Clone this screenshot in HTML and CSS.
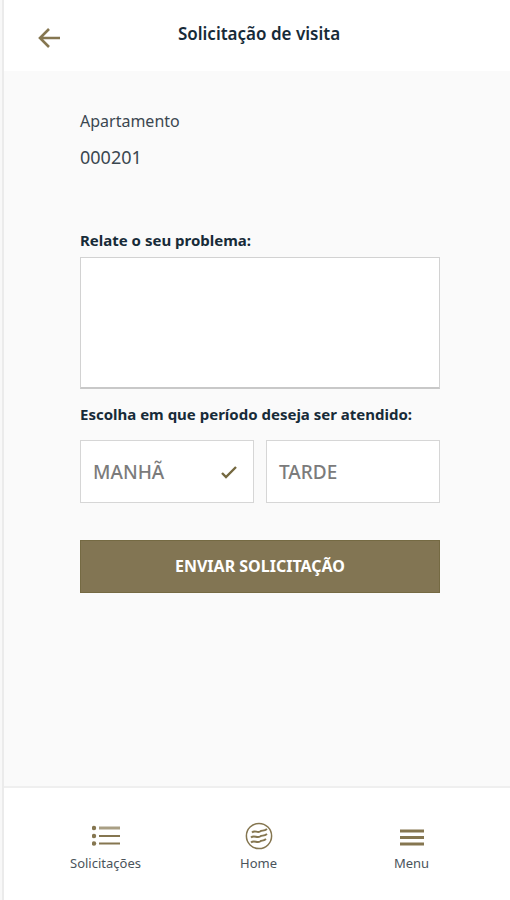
FILE: index.html
```
<!DOCTYPE html>
<html lang="pt-BR">
<head>
  <meta charset="UTF-8" />
  <meta name="viewport" content="width=device-width, initial-scale=1.0"/>
  <title>Solicitação de visita</title>
  <link rel="stylesheet" href="styles.css">
</head>
<body>

  <header class="header">
    <a class="back-btn" href="#" aria-label="Voltar">
      <svg width="22" height="22" viewBox="0 0 22 22" fill="none" stroke="currentColor" stroke-width="2.6">
        <path d="M22 11H2M11 2L2 11L11 20"/>
      </svg>
    </a>
    <h1>Solicitação de visita</h1>
  </header>

  <main class="main">
    <dl class="unit">
      <dt>Apartamento</dt>
      <dd>000201</dd>
    </dl>

    <form class="visit-form">
      <label class="field-title" for="problem">Relate o seu problema:</label>
      <textarea id="problem" name="problem"></textarea>

      <fieldset class="period">
        <legend class="field-title">Escolha em que período deseja ser atendido:</legend>
        <div class="period-options">
          <label class="option">
            <input type="radio" name="period" value="manha" checked />
            <span>MANHÃ</span>
            <svg class="check" width="16" height="14" viewBox="0 0 16 14" fill="none" stroke="currentColor" stroke-width="2.4">
              <path d="M1 8L5 12L15 2"/>
            </svg>
          </label>
          <label class="option">
            <input type="radio" name="period" value="tarde" />
            <span>TARDE</span>
            <svg class="check" width="16" height="14" viewBox="0 0 16 14" fill="none" stroke="currentColor" stroke-width="2.4">
              <path d="M1 8L5 12L15 2"/>
            </svg>
          </label>
        </div>
      </fieldset>

      <button class="submit-btn" type="submit">ENVIAR SOLICITAÇÃO</button>
    </form>
  </main>

  <nav class="bottom-nav">
    <a href="#">
      <svg width="28" height="28" viewBox="0 0 28 28" fill="none" stroke="currentColor">
        <path d="M7 6H28" stroke-width="3" opacity="0.7"/>
        <path d="M7 14H28M7 21.5H28" stroke-width="2.2"/>
        <g fill="currentColor" stroke="none">
          <circle cx="2" cy="6" r="2.2"/>
          <circle cx="2" cy="14" r="2.2"/>
          <circle cx="2" cy="21.5" r="2.2"/>
        </g>
      </svg>
      <span>Solicitações</span>
    </a>
    <a href="#">
      <svg width="28" height="28" viewBox="0 0 28 28" fill="none" stroke="currentColor">
        <circle cx="14" cy="14" r="12.6" stroke-width="1.5"/>
        <path d="M7 10.5C10 7.5 12 11.5 15 9.5C17 8 19 9.5 22 7M6 15.5C9 12.5 12 16.5 15 14.5C17 13 19 14.5 22 12M6 20.5C9 17.5 12 21.5 15 19.5C17 18 18 19.5 21 17" stroke-width="1.9"/>
      </svg>
      <span>Home</span>
    </a>
    <a href="#">
      <svg width="24" height="28" viewBox="0 0 24 28" fill="none" stroke="currentColor" stroke-width="2.8">
        <path d="M0 9H24M0 15.5H24M0 22H24"/>
      </svg>
      <span>Menu</span>
    </a>
  </nav>

</body>
</html>
```

FILE: styles.css
```
* {
  box-sizing: border-box;
  margin: 0;
  padding: 0;
}

html {
  padding-left: 2px;
  background: #f8f8f8;
}

body {
  display: flex;
  flex-direction: column;
  min-height: 100vh;
  border-left: 2px solid #ebebeb;
  background: #fafafa;
  color: #172b38;
  font-family: 'Noto Sans', 'Open Sans', sans-serif;
}

.header {
  display: grid;
  grid-template-columns: 22px 1fr 22px;
  align-items: center;
  height: 71px;
  padding: 0 30px 0 34px;
  background: #fff;
}

.header h1 {
  padding-bottom: 4px;
  font-size: 17px;
  font-weight: 600;
  line-height: 24px;
  text-align: center;
}

.back-btn {
  padding-top: 4px;
  color: #857650;
}

.back-btn svg {
  display: block;
}

.main {
  flex: 1;
  padding: 38px 70px 38px 76px;
}

.unit {
  margin-bottom: 59px;
  color: #3a4750;
}

.unit dt {
  font-size: 16px;
  line-height: 24px;
}

.unit dd {
  margin-top: 12px;
  font-size: 18px;
  line-height: 24px;
}

.field-title {
  display: block;
  font-size: 15px;
  font-weight: 700;
  line-height: 24px;
}

textarea {
  display: block;
  width: 100%;
  height: 132px;
  margin-top: 5px;
  padding: 12px;
  border: 1px solid #d2d2d2;
  border-bottom: 2px solid #c8c8c8;
  background: #fff;
  color: inherit;
  font: inherit;
  resize: none;
}

.period {
  margin-top: 13px;
  border: none;
}

.period-options {
  display: grid;
  grid-template-columns: 1fr 1fr;
  gap: 12px;
  margin-top: 14px;
}

.option {
  display: flex;
  align-items: center;
  justify-content: space-between;
  height: 63px;
  padding: 0 16px 0 12px;
  border: 1px solid #d6d6d6;
  background: #fff;
  color: #7b7b7b;
  font-size: 19px;
  font-weight: 500;
  cursor: pointer;
}

.option input {
  position: absolute;
  opacity: 0;
}

.check {
  visibility: hidden;
  color: #74683f;
}

.option input:checked ~ .check {
  visibility: visible;
}

.submit-btn {
  display: block;
  width: 100%;
  height: 53px;
  margin-top: 37px;
  padding-bottom: 2px;
  border: 1px solid #756a43;
  background: #827553;
  color: #fff;
  font-family: inherit;
  font-size: 16px;
  font-weight: 700;
  cursor: pointer;
}

.bottom-nav {
  display: grid;
  grid-template-columns: repeat(3, 1fr);
  height: 114px;
  padding: 34px 22px 0 25px;
  border-top: 2px solid #efefef;
  background: #fff;
}

.bottom-nav a {
  display: flex;
  flex-direction: column;
  align-items: center;
  color: #857650;
  text-decoration: none;
}

.bottom-nav span {
  margin-top: 3px;
  color: #4b545b;
  font-size: 13px;
  line-height: 20px;
}
```
